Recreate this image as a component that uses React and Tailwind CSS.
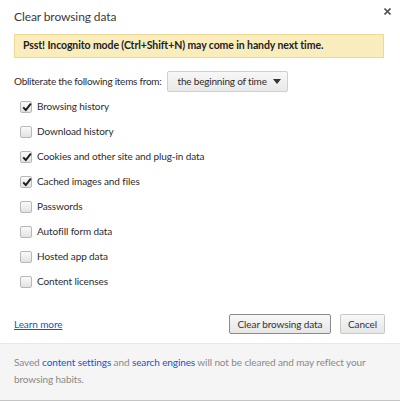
import React, { useState } from 'react';

const ITEMS = [
  { key: 'browsing', label: 'Browsing history', checked: true },
  { key: 'download', label: 'Download history', checked: false },
  { key: 'cookies', label: 'Cookies and other site and plug-in data', checked: true },
  { key: 'cache', label: 'Cached images and files', checked: true },
  { key: 'passwords', label: 'Passwords', checked: false },
  { key: 'autofill', label: 'Autofill form data', checked: false },
  { key: 'hosted', label: 'Hosted app data', checked: false },
  { key: 'licenses', label: 'Content licenses', checked: false },
];

function Checkbox({ checked, onChange }) {
  return (
    <button
      type="button"
      onClick={onChange}
      className="relative w-[12px] h-[12px] rounded-[2px] border border-[#b8b8b8] bg-gradient-to-b from-[#fafafa] to-[#e2e2e2] shrink-0"
    >
      {checked && (
        <svg className="absolute left-[1px] top-[0px]" width="10" height="10" viewBox="0 0 10 10">
          <path d="M1.2 5.4 L3.8 8 L8.8 1.6" fill="none" stroke="#1a1a1a" strokeWidth="1.9" />
        </svg>
      )}
    </button>
  );
}

export default function App() {
  const [items, setItems] = useState(ITEMS);

  const toggle = (key) => {
    setItems(items.map((i) => (i.key === key ? { ...i, checked: !i.checked } : i)));
  };

  return (
    <div className="w-[400px] h-[401px] bg-white flex flex-col font-['Lato',sans-serif] text-[#2b2b2b] text-[10px] tracking-[-0.1px] border-b border-[#c4c4c4] whitespace-nowrap">
      {/* Header */}
      <div className="relative px-[14px] pt-[7px]">
        <h1 className="text-[12px] leading-[20px] text-[#3a3a3a]">Clear browsing data</h1>
        <svg className="absolute right-[9px] top-[8px]" width="7" height="7" viewBox="0 0 7 7">
          <path d="M0.5 0.5 L6.5 6.5 M6.5 0.5 L0.5 6.5" stroke="#555" strokeWidth="1.6" />
        </svg>
      </div>

      {/* Incognito banner */}
      <div className="ml-[14px] mr-[16px] mt-[7px] h-[24px] bg-[#f9edbe] border border-[#f0d98c] flex items-center px-[8px]">
        <span className="font-bold text-[10.5px] text-[#222]">
          Psst! Incognito mode (Ctrl+Shift+N) may come in handy next time.
        </span>
      </div>

      {/* Time range */}
      <div className="mx-[14px] mt-[13px] flex items-center gap-[5px]">
        <span className="tracking-[-0.25px]">Obliterate the following items from:</span>
        <div className="h-[21px] w-[121px] border border-[#cfcfcf] rounded-[2px] bg-gradient-to-b from-[#f7f7f7] to-[#e9e9e9] flex items-center justify-between pl-[10px] pr-[6px]">
          <span className="tracking-[-0.2px]">the beginning of time</span>
          <svg width="8" height="5" viewBox="0 0 8 5">
            <path d="M0 0 L8 0 L4 5 Z" fill="#333" />
          </svg>
        </div>
      </div>

      {/* Checkbox list */}
      <div className="mt-[2px] flex flex-col">
        {items.map((item) => (
          <label key={item.key} className="h-[25px] pl-[20px] flex items-center gap-[5px]">
            <Checkbox checked={item.checked} onChange={() => toggle(item.key)} />
            <span>{item.label}</span>
          </label>
        ))}
      </div>

      {/* Actions */}
      <div className="ml-[14px] mr-[15px] mt-[20px] flex items-center justify-between">
        <a href="#" className="text-[#15c] underline">Learn more</a>
        <div className="flex gap-[9px]">
          <button className="h-[20px] w-[102px] border border-[#8a8a8a] rounded-[2px] bg-gradient-to-b from-[#f8f8f8] to-[#e6e6e6] text-[#333]">
            Clear browsing data
          </button>
          <button className="h-[20px] w-[45px] border border-[#c8c8c8] rounded-[2px] bg-gradient-to-b from-[#f8f8f8] to-[#e6e6e6] text-[#333]">
            Cancel
          </button>
        </div>
      </div>

      {/* Footer */}
      <div className="mt-auto h-[57px] bg-[#f5f5f5] border-t border-[#e8e8e8] px-[14px] pt-[10px] text-[#888] leading-[17px] whitespace-normal">
        Saved <a href="#" className="text-[#15c]">content settings</a> and{' '}
        <a href="#" className="text-[#15c]">search engines</a> will not be cleared and may reflect your browsing habits.
      </div>
    </div>
  );
}
